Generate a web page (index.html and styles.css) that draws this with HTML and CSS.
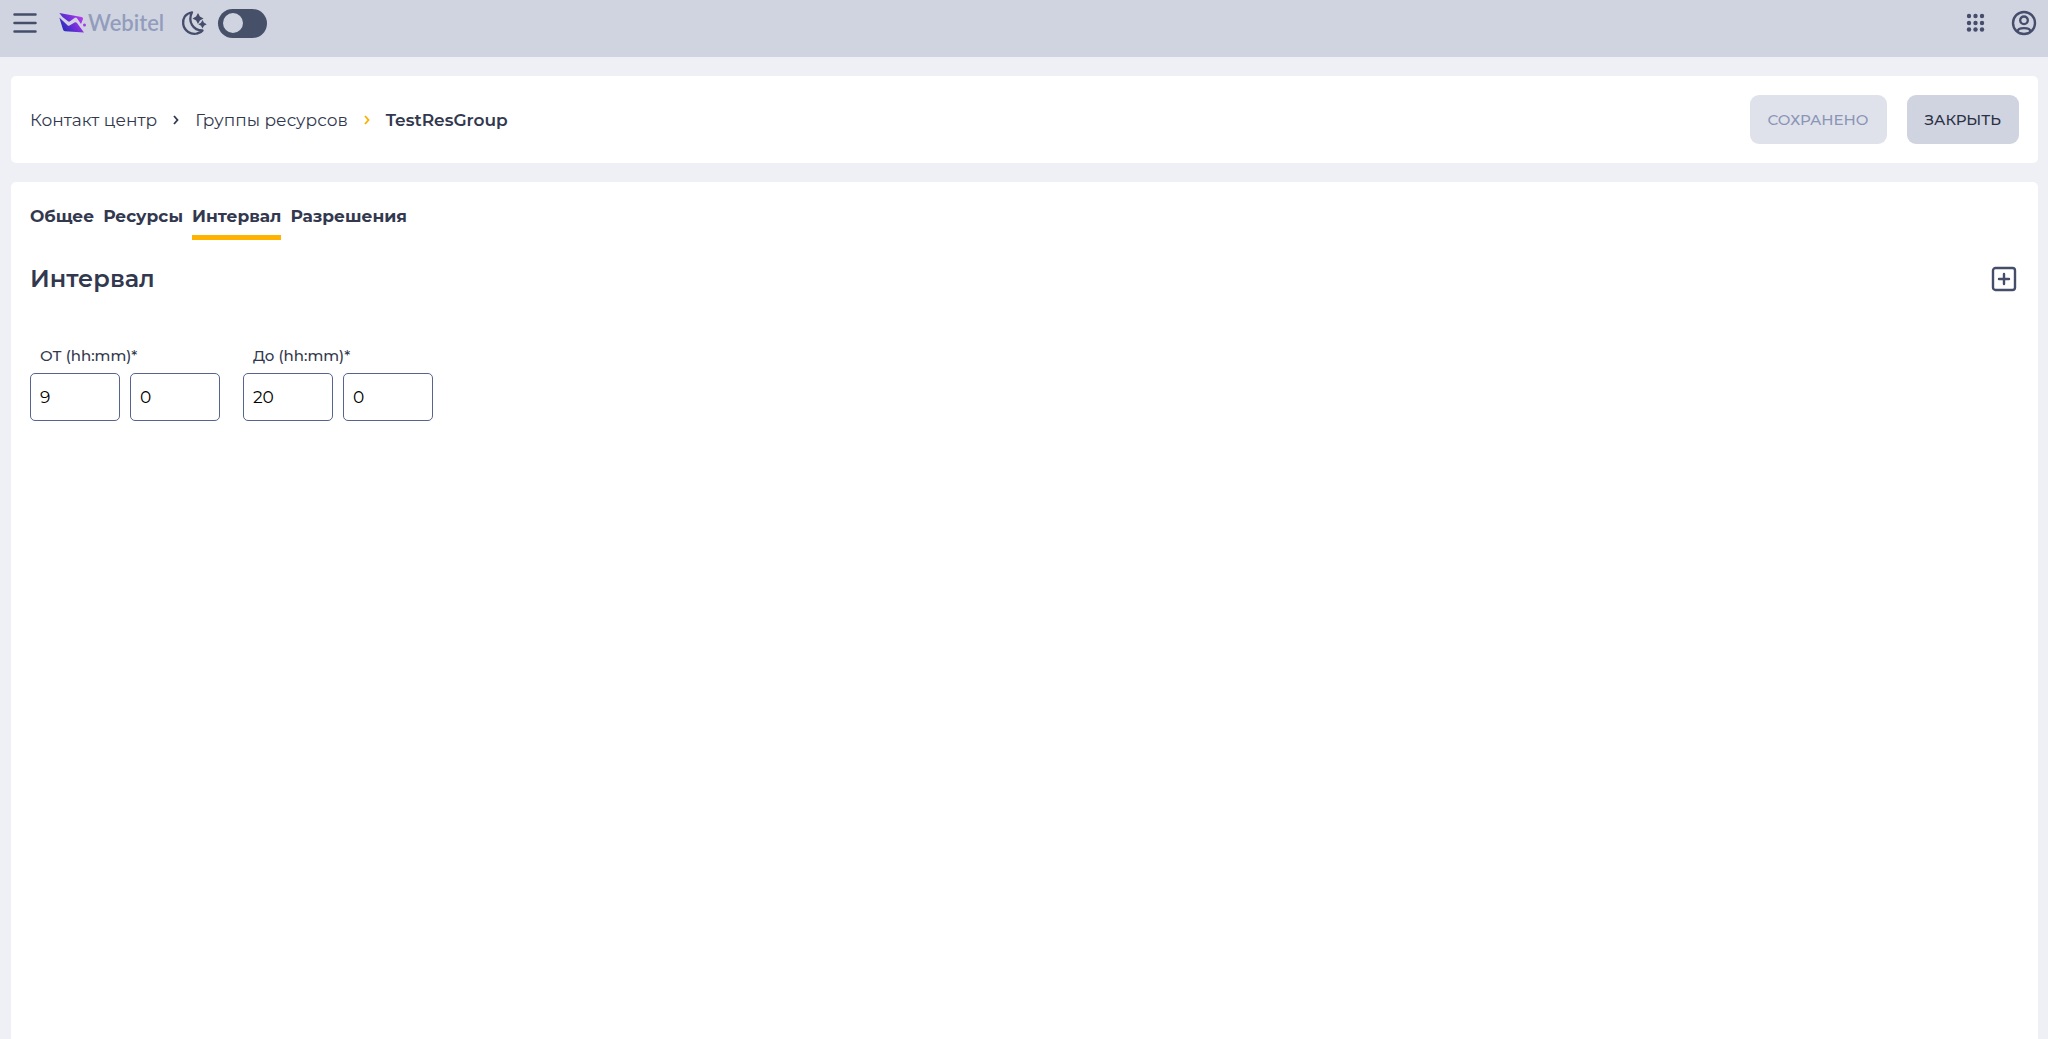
FILE: index.html
```html
<!DOCTYPE html>
<html lang="ru">
<head>
<meta charset="utf-8">
<meta name="viewport" content="width=device-width, initial-scale=1">
<title>TestResGroup — Webitel</title>
<link rel="stylesheet" href="styles.css">
</head>
<body>
<header class="app-header">
  <button class="icon-btn" type="button" aria-label="Меню">
    <svg width="26" height="26" viewBox="0 0 26 26" fill="none" stroke="currentColor" stroke-width="2.5" stroke-linecap="round"><path d="M2.500 4.500h21M2.500 13h21M2.500 21.500h21"/></svg>
  </button>
  <a class="logo" href="#">
    <svg width="28" height="22" viewBox="-1 0 28 22">
      <defs>
        <linearGradient id="mark" gradientUnits="userSpaceOnUse" x1="3" y1="20" x2="23" y2="5"><stop offset="0" stop-color="#1c2bb8"/><stop offset=".5" stop-color="#6a2fd6"/><stop offset="1" stop-color="#b83af0"/></linearGradient>
      </defs>
      <g fill="url(#mark)">
        <path d="M.3 1 22.500 5Q24.500 5.500 24 7L22 12 18 6.200Q17 5 15.500 6L11 9.300Q10 10 9 9.200L3.500 5Z"/>
        <path d="M.3 5.500 8.500 13.300Q9.500 14.200 10.500 13.500L15.500 10.500Q17 9.800 18 11L25 20.500 6 19.300Q4.500 19 4 17.500Z"/>
      </g>
      <circle cx="25.500" cy="13" r="1.500" fill="#a83aef"/>
    </svg>
    <span class="logo-text">Webitel</span>
  </a>
  <label class="theme">
    <svg width="26" height="26" viewBox="0 0 26 26" fill="none" stroke="currentColor" stroke-width="2.300" stroke-linejoin="round"><path d="M11 2.300C4 3.500 1.500 9 2.200 14 3.200 21 10 25 16 23.500 18.500 23 20.500 22 21.500 20.500 12 20.500 6.500 11.500 11 2.300Z"/><path fill="currentColor" stroke="none" d="M17 3l1.900 3.600L22.500 8.500 18.900 10.400 17 14 15.100 10.400 11.500 8.500 15.100 6.600ZM21.500 10l1.500 2.700 2.700 1.500-2.700 1.500-1.500 2.700-1.500-2.700-2.700-1.500 2.700-1.500Z"/></svg>
    <input class="switch" type="checkbox" role="switch" aria-label="Тёмная тема">
  </label>
  <nav class="header-actions" aria-label="Приложения и профиль">
    <button class="icon-btn" type="button" aria-label="Приложения">
      <svg width="26" height="26" viewBox="0 0 26 26" fill="currentColor"><circle cx="6" cy="6" r="2.200"/><circle cx="12.500" cy="6" r="2.200"/><circle cx="19" cy="6" r="2.200"/><circle cx="6" cy="13" r="2.200"/><circle cx="12.500" cy="13" r="2.200"/><circle cx="19" cy="13" r="2.200"/><circle cx="6" cy="19.500" r="2.200"/><circle cx="12.500" cy="19.500" r="2.200"/><circle cx="19" cy="19.500" r="2.200"/></svg>
    </button>
    <button class="icon-btn" type="button" aria-label="Профиль">
      <svg width="26" height="26" viewBox="0 0 26 26" fill="none" stroke="currentColor" stroke-width="2.400"><circle cx="13" cy="13" r="11"/><circle cx="13" cy="10.300" r="3.800"/><path d="M6.500 21.500C7 17 19 17 19.500 21.500"/></svg>
    </button>
  </nav>
</header>
<main class="page">
  <section class="card toolbar">
    <nav class="crumbs" aria-label="Путь">
      <a href="#">Контакт центр</a>
      <svg class="chevron" width="6" height="10" viewBox="0 0 6 10"><path d="M1 1l3.500 4L1 9"/></svg>
      <a href="#">Группы ресурсов</a>
      <svg class="chevron chevron-accent" width="6" height="10" viewBox="0 0 6 10"><path d="M1 1l3.500 4L1 9"/></svg>
      <a class="current" href="#" aria-current="page">TestResGroup</a>
    </nav>
    <div class="actions">
      <button class="btn btn-saved" type="button" disabled>СОХРАНЕНО</button>
      <button class="btn btn-close" type="button">ЗАКРЫТЬ</button>
    </div>
  </section>
  <section class="card content">
    <nav class="tabs" aria-label="Разделы">
      <a href="#">Общее</a>
      <a href="#">Ресурсы</a>
      <a class="active" href="#" aria-current="true">Интервал</a>
      <a href="#">Разрешения</a>
    </nav>
    <header class="section-head">
      <h1>Интервал</h1>
      <button class="icon-btn" type="button" aria-label="Добавить">
        <svg width="26" height="26" viewBox="0 0 26 26" fill="none" stroke="currentColor" stroke-width="2.400" stroke-linecap="round"><rect x="2" y="2" width="22" height="22" rx="2.500"/><path d="M13 8v10M8 13h10"/></svg>
      </button>
    </header>
    <form class="ranges">
      <div class="range">
        <label for="from-h">ОТ (hh:mm)*</label>
        <div class="pair">
          <input id="from-h" type="text" inputmode="numeric" value="9">
          <input type="text" inputmode="numeric" value="0" aria-label="ОТ, минуты">
        </div>
      </div>
      <div class="range">
        <label for="to-h">До (hh:mm)*</label>
        <div class="pair">
          <input id="to-h" type="text" inputmode="numeric" value="20">
          <input type="text" inputmode="numeric" value="0" aria-label="До, минуты">
        </div>
      </div>
    </form>
  </section>
</main>
</body>
</html>
```
FILE: styles.css
```css
* { box-sizing: border-box; }

body {
  display: flex;
  flex-direction: column;
  min-height: 100vh;
  margin: 0;
  background: #eff0f5;
  color: #32384e;
  font-family: Montserrat, Inter, "Noto Sans", sans-serif;
  font-size: 17px;
  line-height: 24px;
}

a { color: inherit; text-decoration: none; }
button, input { font-family: inherit; }
svg { display: block; flex: none; }

.icon-btn {
  padding: 0;
  border: 0;
  background: none;
  color: #454d6b;
}

.app-header {
  display: flex;
  align-items: flex-start;
  height: 57px;
  padding: 8px 11px 0 12px;
  background: #d0d4e0;
}
.app-header .icon-btn, .logo, .theme { display: flex; align-items: center; height: 30px; }
.logo { gap: 2px; margin-left: 20px; }
.logo-text {
  color: #929dbd;
  font-family: Lato, sans-serif;
  font-size: 22px;
  font-weight: 600;
}
.theme { gap: 11px; margin-left: 17px; color: #454d6b; }
.switch {
  display: flex;
  align-items: center;
  width: 49px;
  height: 29px;
  margin: 0;
  padding: 5px;
  border-radius: 15px;
  background: #475069;
  appearance: none;
}
.switch::before {
  width: 20px;
  height: 20px;
  border-radius: 50%;
  background: #d0d4e0;
  content: "";
}
.switch:checked { justify-content: flex-end; }
.header-actions { display: flex; gap: 22px; margin-left: auto; }

.page {
  display: flex;
  flex: 1;
  flex-direction: column;
  gap: 19px;
  padding: 19px 10px 0 11px;
}
.card { border-radius: 5px; background: #fff; }

.toolbar {
  display: flex;
  align-items: center;
  justify-content: space-between;
  padding: 19px;
}
.crumbs { display: flex; align-items: center; gap: 16px; }
.current { font-weight: 600; }
.chevron { fill: none; stroke: #32384e; stroke-width: 1.8; }
.chevron-accent { stroke: #f9b000; }

.actions { display: flex; gap: 20px; }
.btn {
  height: 49px;
  padding: 0 18px;
  border: 0;
  border-radius: 9px;
  font-size: 15px;
  font-weight: 500;
}
.btn-saved { background: #dfe2ea; color: #8b95b7; }
.btn-close { background: #d0d4e0; color: #2b3045; }

.content {
  flex: 1;
  padding: 19px;
  border-radius: 5px 5px 0 0;
}
.tabs { display: flex; gap: 9px; font-weight: 700; }
.tabs a { padding: 3px 0 7px; border-bottom: 5px solid transparent; }
.tabs .active { border-color: #ffb200; }

.section-head {
  display: flex;
  align-items: center;
  justify-content: space-between;
  margin-top: 23px;
  padding-right: 2px;
}
h1 { margin: 0; font-size: 24px; font-weight: 600; line-height: 32px; }

.ranges { display: flex; gap: 23px; margin-top: 49px; }
.range label {
  display: block;
  padding-left: 10px;
  font-size: 15px;
  font-weight: 500;
}
.pair { display: flex; gap: 10px; margin-top: 5px; }
.pair input {
  width: 90px;
  height: 48px;
  padding: 0 9px;
  border: 1px solid #56648f;
  border-radius: 5px;
  background: #fff;
  color: #000;
  font-size: 17px;
}
```
